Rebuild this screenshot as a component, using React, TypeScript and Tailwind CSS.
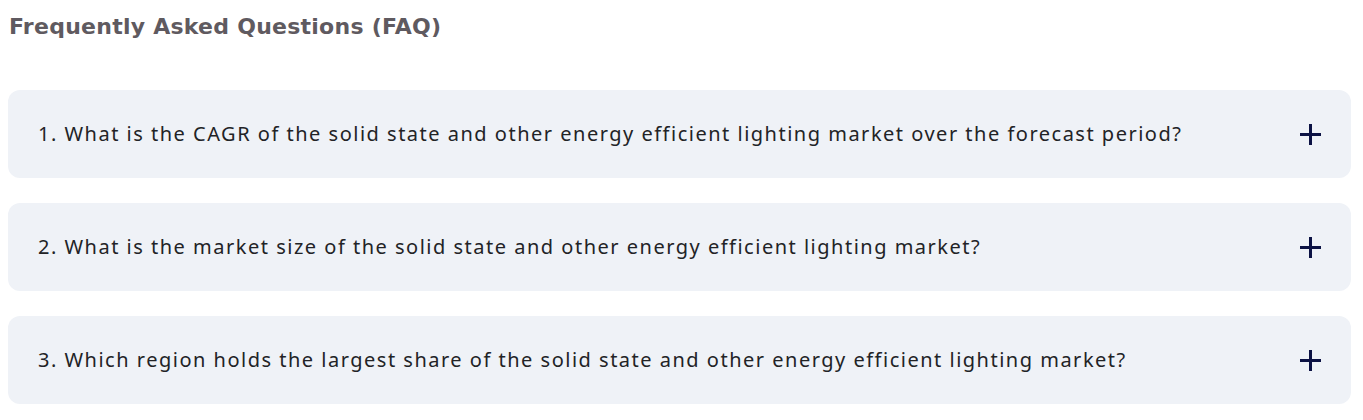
const faqs = [
  "1. What is the CAGR of the solid state and other energy efficient lighting market over the forecast period?",
  "2. What is the market size of the solid state and other energy efficient lighting market?",
  "3. Which region holds the largest share of the solid state and other energy efficient lighting market?",
]

function Plus() {
  return (
    <svg width="21" height="21" viewBox="0 0 21 21" className="shrink-0">
      <path d="M10.5 0v21M0 10.5h21" stroke="#0c1244" strokeWidth="3" />
    </svg>
  )
}

export default function App() {
  return (
    <div className="bg-white w-[1363px] h-[420px] pl-2 pr-3 pt-[12px]">
      <h2 className="text-[22px] font-bold tracking-[0.25px] text-[#5f5a60] pl-px leading-[30px]" style={{ fontFamily: '"DejaVu Sans", sans-serif' }}>
        Frequently Asked Questions (FAQ)
      </h2>
      <div className="mt-[48px] flex flex-col gap-[25px]">
        {faqs.map((q) => (
          <div key={q} className="h-[88px] rounded-[12px] bg-[#eff2f7] flex items-center justify-between pl-[30px] pr-[30px]">
            <span className="text-[20px] tracking-[1.5px] text-[#222326]" style={{ fontFamily: '"Noto Sans", sans-serif' }}>
              {q}
            </span>
            <Plus />
          </div>
        ))}
      </div>
    </div>
  )
}
